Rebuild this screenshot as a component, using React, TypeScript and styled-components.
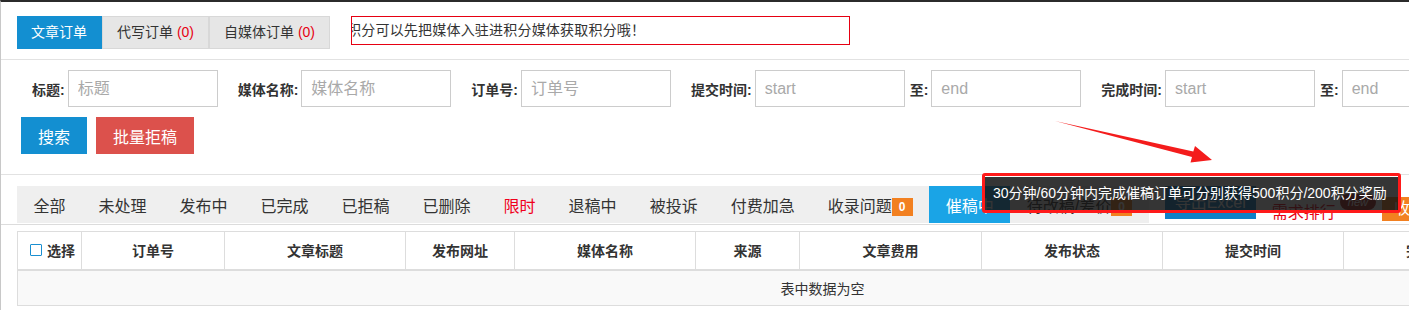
import React from 'react';
import styled, { createGlobalStyle } from 'styled-components';

const GlobalStyle = createGlobalStyle`
  html, body {
    margin: 0;
    padding: 0;
    overflow: hidden;
    background: #fff;
  }
  body {
    font-family: "Liberation Sans", "Noto Sans CJK SC", sans-serif;
    color: #333;
  }
  * {
    box-sizing: border-box;
  }
`;

const Page = styled.div`
  position: relative;
  width: 1720px;
  height: 310px;
  border-top: 2px solid #2b2b2b;
  border-left: 1px solid #c8c8c8;
`;

const TopBar = styled.div`
  display: flex;
  align-items: flex-start;
  padding: 14px 0 10px 16px;
  border-bottom: 1px solid #e2e2e2;
`;

const OrderTabs = styled.div`
  display: flex;
`;

const OrderTab = styled.div<{ $active?: boolean }>`
  height: 33px;
  line-height: 31px;
  padding: 0 14px;
  font-size: 14px;
  white-space: nowrap;
  border: 1px solid ${(p) => (p.$active ? '#138fd1' : '#d8d8d8')};
  border-left-width: ${(p) => (p.$active ? '0' : '1px')};
  background: ${(p) => (p.$active ? '#138fd1' : '#e6e6e6')};
  color: ${(p) => (p.$active ? '#fff' : '#333')};

  em {
    font-style: normal;
    color: #e60012;
  }
`;

const Notice = styled.div`
  margin-left: 21px;
  width: 499px;
  height: 29px;
  border: 1px solid #e60012;
  overflow: hidden;
  white-space: nowrap;
  font-size: 14px;
  line-height: 27px;
  color: #333;

  span {
    display: inline-block;
    margin-left: -5px;
    letter-spacing: 0.2px;
  }
`;

const FilterArea = styled.div`
  padding: 10px 0 20px 20px;
  border-bottom: 1px solid #e2e2e2;
`;

const FilterRow = styled.div`
  display: flex;
  align-items: center;
  gap: 20px;
  padding-left: 11px;
`;

const Field = styled.div`
  display: flex;
  align-items: center;
  gap: 3px;
`;

const Label = styled.label<{ $gap?: number }>`
  font-size: 14px;
  font-weight: bold;
  color: #333;
  white-space: nowrap;
  margin-left: ${(p) => p.$gap ?? 0}px;
`;

const TextInput = styled.input`
  width: 150px;
  height: 37px;
  border: 1px solid #ccc;
  padding: 0 9px;
  font-family: inherit;
  font-size: 16px;
  color: #333;
  outline: none;

  &::placeholder {
    color: #a9a9a9;
  }
`;

const ButtonRow = styled.div`
  display: flex;
  gap: 9px;
  margin-top: 10px;
`;

const ActionButton = styled.button<{ $color: string }>`
  height: 37px;
  padding: 0 17px;
  border: none;
  font-family: inherit;
  font-size: 16px;
  color: #fff;
  background: ${(p) => p.$color};
`;

const StatusArea = styled.div`
  padding: 11px 0 1px 16px;
  border-bottom: 1px solid #dcdcdc;
`;

const StatusBar = styled.div`
  display: flex;
  align-items: flex-start;
  height: 37px;
`;

const StatusGroup = styled.div`
  display: flex;
  height: 37px;
  background: #efefef;
`;

const StatusItem = styled.div<{ $active?: boolean; $red?: boolean }>`
  display: flex;
  align-items: center;
  padding: 0 16.5px;
  font-size: 16px;
  white-space: nowrap;
  background: ${(p) => (p.$active ? '#1aa4e6' : 'transparent')};
  color: ${(p) => (p.$active ? '#fff' : p.$red ? '#f0001c' : '#333')};
`;

const Badge = styled.span`
  display: inline-block;
  width: 21px;
  height: 18px;
  line-height: 18px;
  margin-top: 4px;
  text-align: center;
  font-size: 12px;
  font-weight: bold;
  color: #fff;
  background: #f28020;
`;

const ExportButton = styled.div`
  margin-left: 16px;
  height: 33px;
  line-height: 33px;
  padding: 0 10px;
  font-size: 16px;
  color: #fff;
  background: #0f82c7;
  white-space: nowrap;
`;

const RankLink = styled.div`
  display: flex;
  align-items: flex-start;
  margin-left: 16px;
  padding-top: 13px;
  font-size: 16px;
  color: #e60012;
  white-space: nowrap;
`;

const NewTag = styled.span`
  margin: -5px 0 0 4px;
  padding: 0 8px;
  height: 16px;
  line-height: 16px;
  border-radius: 8px;
  font-size: 11px;
  font-style: italic;
  color: #fff;
  background: #a61d17;
`;

const OrangeButton = styled.div`
  margin: 11px 0 0 6px;
  height: 24px;
  line-height: 24px;
  padding: 0 12px;
  font-size: 16px;
  color: #fff;
  background: #f28020;
  white-space: nowrap;
`;

const TableArea = styled.div`
  padding: 6px 0 0 16px;
`;

const DataTable = styled.table`
  width: 1610px;
  table-layout: fixed;
  border-collapse: collapse;
  border: 1px solid #ddd;

  th {
    height: 38px;
    border: 1px solid #ddd;
    border-bottom: 2px solid #ddd;
    font-size: 14px;
    font-weight: bold;
    color: #333;
    text-align: center;
    background: #fff;
  }

  td {
    height: 36px;
    font-size: 14px;
    color: #333;
    text-align: center;
    background: #f9f9f9;
  }
`;

const SelectHead = styled.div`
  display: flex;
  align-items: center;
  gap: 5px;
  padding-left: 11px;
`;

const CheckBox = styled.span`
  width: 12px;
  height: 12px;
  border: 1.5px solid #1a8fd1;
  border-radius: 1px;
  background: #fff;
`;

const Tooltip = styled.div`
  position: absolute;
  left: 984px;
  top: 175px;
  width: 413px;
  height: 33px;
  line-height: 33px;
  padding-left: 8px;
  font-size: 14px;
  color: #fff;
  white-space: nowrap;
  background: rgba(20, 20, 20, 0.86);
`;

const Highlight = styled.div`
  position: absolute;
  left: 981px;
  top: 171px;
  width: 419px;
  height: 40px;
  border: 3px solid #ff1a1a;
  border-radius: 3px;
`;

const ArrowLayer = styled.svg`
  position: absolute;
  left: -1px;
  top: -2px;
  pointer-events: none;
`;

const statuses = [
  { label: '全部' },
  { label: '未处理' },
  { label: '发布中' },
  { label: '已完成' },
  { label: '已拒稿' },
  { label: '已删除' },
  { label: '限时', red: true },
  { label: '退稿中' },
  { label: '被投诉' },
  { label: '付费加急' },
];

const columns: [string, number][] = [
  ['订单号', 143],
  ['文章标题', 181],
  ['发布网址', 109],
  ['媒体名称', 181],
  ['来源', 104],
  ['文章费用', 182],
  ['发布状态', 181],
  ['提交时间', 181],
  ['完成时间', 181],
  ['操作', 103],
];

export default function App() {
  return (
    <>
      <GlobalStyle />
      <Page>
        <TopBar>
          <OrderTabs>
            <OrderTab $active>文章订单</OrderTab>
            <OrderTab>
              代写订单 <em>(0)</em>
            </OrderTab>
            <OrderTab>
              自媒体订单 <em>(0)</em>
            </OrderTab>
          </OrderTabs>
          <Notice>
            <span>积分可以先把媒体入驻进积分媒体获取积分哦！</span>
          </Notice>
        </TopBar>

        <FilterArea>
          <FilterRow>
            <Field>
              <Label>标题:</Label>
              <TextInput placeholder="标题" />
            </Field>
            <Field>
              <Label>媒体名称:</Label>
              <TextInput placeholder="媒体名称" />
            </Field>
            <Field>
              <Label>订单号:</Label>
              <TextInput placeholder="订单号" />
            </Field>
            <Field>
              <Label>提交时间:</Label>
              <TextInput placeholder="start" />
              <Label $gap={2}>至:</Label>
              <TextInput placeholder="end" />
            </Field>
            <Field>
              <Label>完成时间:</Label>
              <TextInput placeholder="start" />
              <Label $gap={2}>至:</Label>
              <TextInput placeholder="end" />
            </Field>
          </FilterRow>
          <ButtonRow>
            <ActionButton $color="#138fd1">搜索</ActionButton>
            <ActionButton $color="#dc514c">批量拒稿</ActionButton>
          </ButtonRow>
        </FilterArea>

        <StatusArea>
          <StatusBar>
            <StatusGroup>
              {statuses.map((s) => (
                <StatusItem key={s.label} $red={s.red}>
                  {s.label}
                </StatusItem>
              ))}
              <StatusItem>
                收录问题<Badge>0</Badge>
              </StatusItem>
              <StatusItem $active>催稿中</StatusItem>
              <StatusItem>
                待改稿/差价<Badge>0</Badge>
              </StatusItem>
            </StatusGroup>
            <ExportButton>导出Excel</ExportButton>
            <RankLink>
              需求排行<NewTag>new</NewTag>
            </RankLink>
            <OrangeButton>收录统计</OrangeButton>
          </StatusBar>
        </StatusArea>

        <TableArea>
          <DataTable>
            <colgroup>
              <col style={{ width: 64 }} />
              {columns.map(([name, w]) => (
                <col key={name} style={{ width: w }} />
              ))}
            </colgroup>
            <thead>
              <tr>
                <th>
                  <SelectHead>
                    <CheckBox />
                    选择
                  </SelectHead>
                </th>
                {columns.map(([name]) => (
                  <th key={name}>{name}</th>
                ))}
              </tr>
            </thead>
            <tbody>
              <tr>
                <td colSpan={columns.length + 1}>表中数据为空</td>
              </tr>
            </tbody>
          </DataTable>
        </TableArea>

        <ArrowLayer width="1409" height="312" viewBox="0 0 1409 312">
          <polygon
            points="1055,121 1193.3,151.5 1195,146 1212,160 1190.5,162.5 1192,157"
            fill="#f41c1c"
          />
        </ArrowLayer>
        <Tooltip>30分钟/60分钟内完成催稿订单可分别获得500积分/200积分奖励</Tooltip>
        <Highlight />
      </Page>
    </>
  );
}
